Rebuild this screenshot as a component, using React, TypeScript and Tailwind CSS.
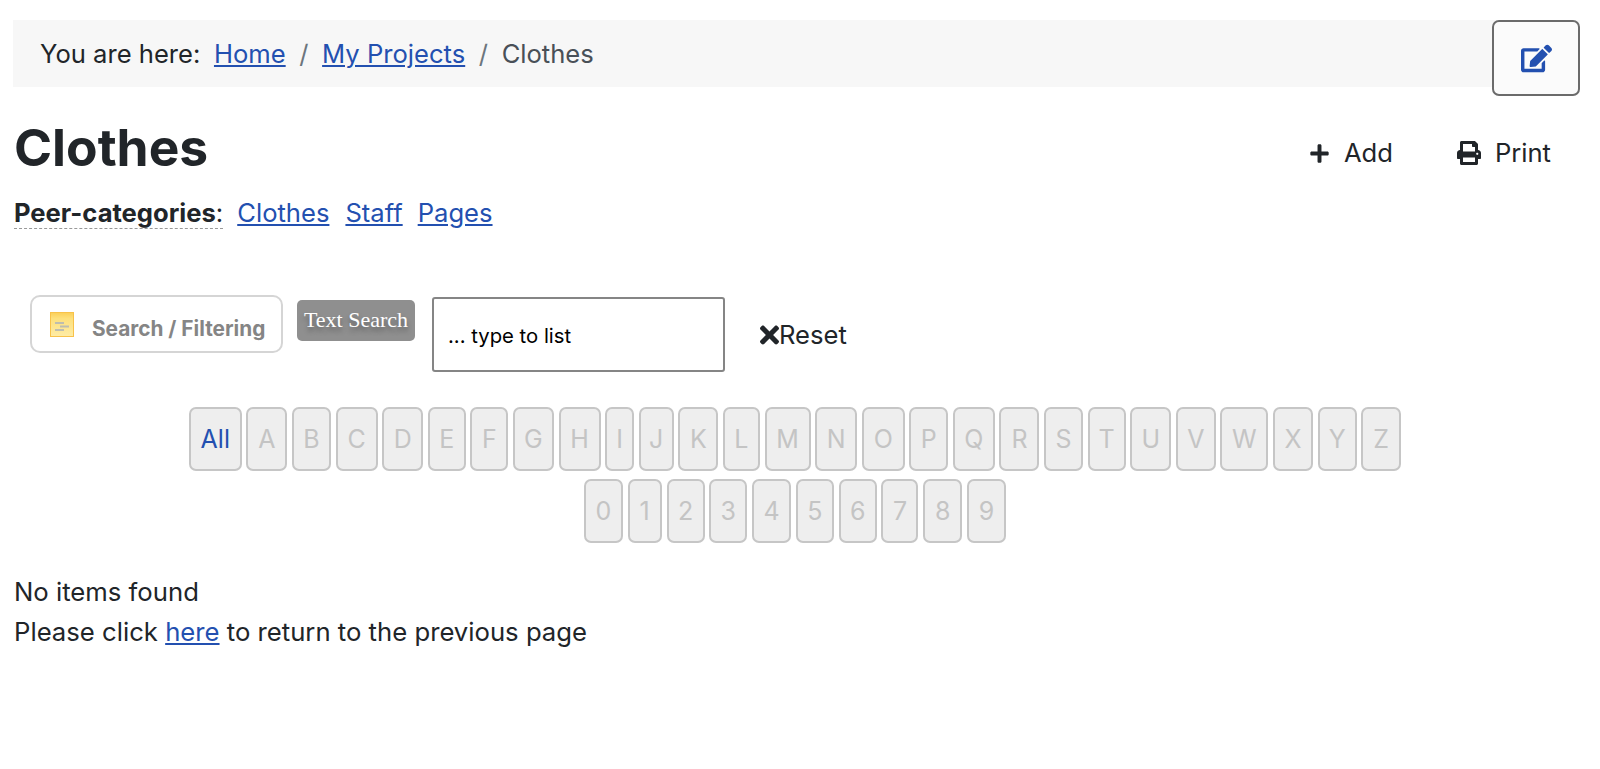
import { FaEdit, FaPlus, FaPrint, FaTimes } from "react-icons/fa";

const letters = [
  { label: "A", w: "w-[41px]" },
  { label: "B", w: "w-[39px]" },
  { label: "C", w: "w-[42px]" },
  { label: "D", w: "w-[41px]" },
  { label: "E", w: "w-[38px]" },
  { label: "F", w: "w-[38px]" },
  { label: "G", w: "w-[41px]" },
  { label: "H", w: "w-[42px]" },
  { label: "I", w: "w-[29px]" },
  { label: "J", w: "w-[35px]" },
  { label: "K", w: "w-[40px]" },
  { label: "L", w: "w-[37px]" },
  { label: "M", w: "w-[46px]" },
  { label: "N", w: "w-[42px]" },
  { label: "O", w: "w-[43px]" },
  { label: "P", w: "w-[39px]" },
  { label: "Q", w: "w-[42px]" },
  { label: "R", w: "w-[40px]" },
  { label: "S", w: "w-[39px]" },
  { label: "T", w: "w-[38px]" },
  { label: "U", w: "w-[41px]" },
  { label: "V", w: "w-[40px]" },
  { label: "W", w: "w-[48px]" },
  { label: "X", w: "w-[40px]" },
  { label: "Y", w: "w-[39px]" },
  { label: "Z", w: "w-[40px]" },
];

const digits = [
  { label: "0", w: "w-[39px]" },
  { label: "1", w: "w-[34px]" },
  { label: "2", w: "w-[38px]" },
  { label: "3", w: "w-[38px]" },
  { label: "4", w: "w-[39px]" },
  { label: "5", w: "w-[38px]" },
  { label: "6", w: "w-[38px]" },
  { label: "7", w: "w-[37px]" },
  { label: "8", w: "w-[39px]" },
  { label: "9", w: "w-[39px]" },
];

function LetterKey({ label, w, active = false }: { label: string; w: string; active?: boolean }) {
  return (
    <span
      className={
        "flex h-[64px] items-center justify-center rounded-[7px] border-2 border-[#c6c6c6] bg-[#eeeeee] text-[25px] " +
        w +
        (active ? " text-[#2350b0]" : " text-[#c4c4c4]")
      }
    >
      {label}
    </span>
  );
}

function NoteIcon() {
  return (
    <svg width="24" height="25" viewBox="0 0 24 25" className="shrink-0">
      <defs>
        <linearGradient id="note" x1="0" y1="0" x2="0" y2="1">
          <stop offset="0" stopColor="#fbcf58" />
          <stop offset="0.25" stopColor="#fde07c" />
          <stop offset="1" stopColor="#feeca6" />
        </linearGradient>
      </defs>
      <rect x="0.5" y="0.5" width="23" height="24" fill="url(#note)" stroke="#f8c24a" />
      <path d="M5 11h9M10 14.5h9M5 18h9" stroke="#bdbdb0" strokeWidth="2" />
    </svg>
  );
}

export default function App() {
  return (
    <div className="relative min-h-[769px] bg-white px-[13px] pt-5 font-['Inter',sans-serif] text-[25.6px] leading-[40px] text-[#212529]">
      {/* Breadcrumb */}
      <nav className="flex h-[67px] w-[1567px] items-center gap-[13.6px] bg-[#f7f7f7] pl-[27px] pt-[1px]">
        <span>You are here:</span>
        <a href="#" className="text-[#2350b0] underline">Home</a>
        <span className="text-[#6c757d]">/</span>
        <a href="#" className="text-[#2350b0] underline">My Projects</a>
        <span className="text-[#6c757d]">/</span>
        <span className="text-[#495057]">Clothes</span>
      </nav>

      <button className="absolute left-[1492px] top-5 flex h-[76px] w-[88px] items-center justify-center rounded-[7px] border-2 border-[#6b6b6b] bg-[#fbfbfb] text-[#2350b0]">
        <FaEdit className="h-[31px] w-[31px]" />
      </button>

      {/* Title row */}
      <div className="mt-[30px] flex items-start justify-between pl-[1px] pr-[36px]">
        <h1 className="text-[51.5px] font-bold leading-[60px]">Clothes</h1>
        <div className="flex items-center gap-[64px] pt-[16px]">
          <span className="flex items-center gap-[14px]">
            <FaPlus className="h-[21px] w-[21px]" /> Add
          </span>
          <span className="flex items-center gap-[14px]">
            <FaPrint className="h-[24px] w-[24px]" /> Print
          </span>
        </div>
      </div>

      <p className="mt-[16px] pl-[1px]">
        <span className="border-b border-dashed border-[#999]">
          <span className="font-bold">Peer-categories</span>:
        </span>
        <a href="#" className="ml-[14px] text-[#2350b0] underline">Clothes</a>
        <a href="#" className="ml-[16px] text-[#2350b0] underline">Staff</a>
        <a href="#" className="ml-[15px] text-[#2350b0] underline">Pages</a>
      </p>

      {/* Filter row */}
      <div className="mt-[62px] flex items-start pl-[17px]">
        <div className="flex h-[58px] w-[253px] items-center gap-[18px] rounded-[10px] border-2 border-[#d5d5d5] pl-[18px] text-[20.8px] font-bold text-[#858585]">
          <NoteIcon />
          <span className="whitespace-nowrap pt-[10px]">Search / Filtering</span>
        </div>
        <div className="ml-[14px] mt-[5px] flex h-[41px] w-[118px] items-center justify-center rounded-[5px] bg-[#8f8f8f] pb-[2px] font-['Liberation_Serif',serif] text-[22px] text-white [text-shadow:0_4px_5px_rgba(0,0,0,0.35)]">
          Text Search
        </div>
        <div className="ml-[17px] mt-[2px] flex h-[75px] w-[293px] items-center rounded-[3px] border-2 border-[#858585] pl-[14px] pt-[2px] text-[20.3px] text-black">
          ... type to list
        </div>
        <div className="ml-[35px] mt-[20px] flex items-center">
          <FaTimes className="h-[28px] w-[19px]" />
          Reset
        </div>
      </div>

      {/* Letter index */}
      <div className="mt-[35px] flex flex-col items-center gap-[8px] pr-[10px]">
        <div className="flex gap-[4.6px]">
          <LetterKey label="All" w="w-[53px]" active />
          {letters.map((l) => <LetterKey key={l.label} label={l.label} w={l.w} />)}
        </div>
        <div className="flex gap-[4.8px]">
          {digits.map((d) => <LetterKey key={d.label} label={d.label} w={d.w} />)}
        </div>
      </div>

      <div className="mt-[29px] pl-[1px] text-[25.7px]">
        <p>No items found</p>
        <p>
          Please click <a href="#" className="text-[#2350b0] underline">here</a> to return to the previous page
        </p>
      </div>
    </div>
  );
}
